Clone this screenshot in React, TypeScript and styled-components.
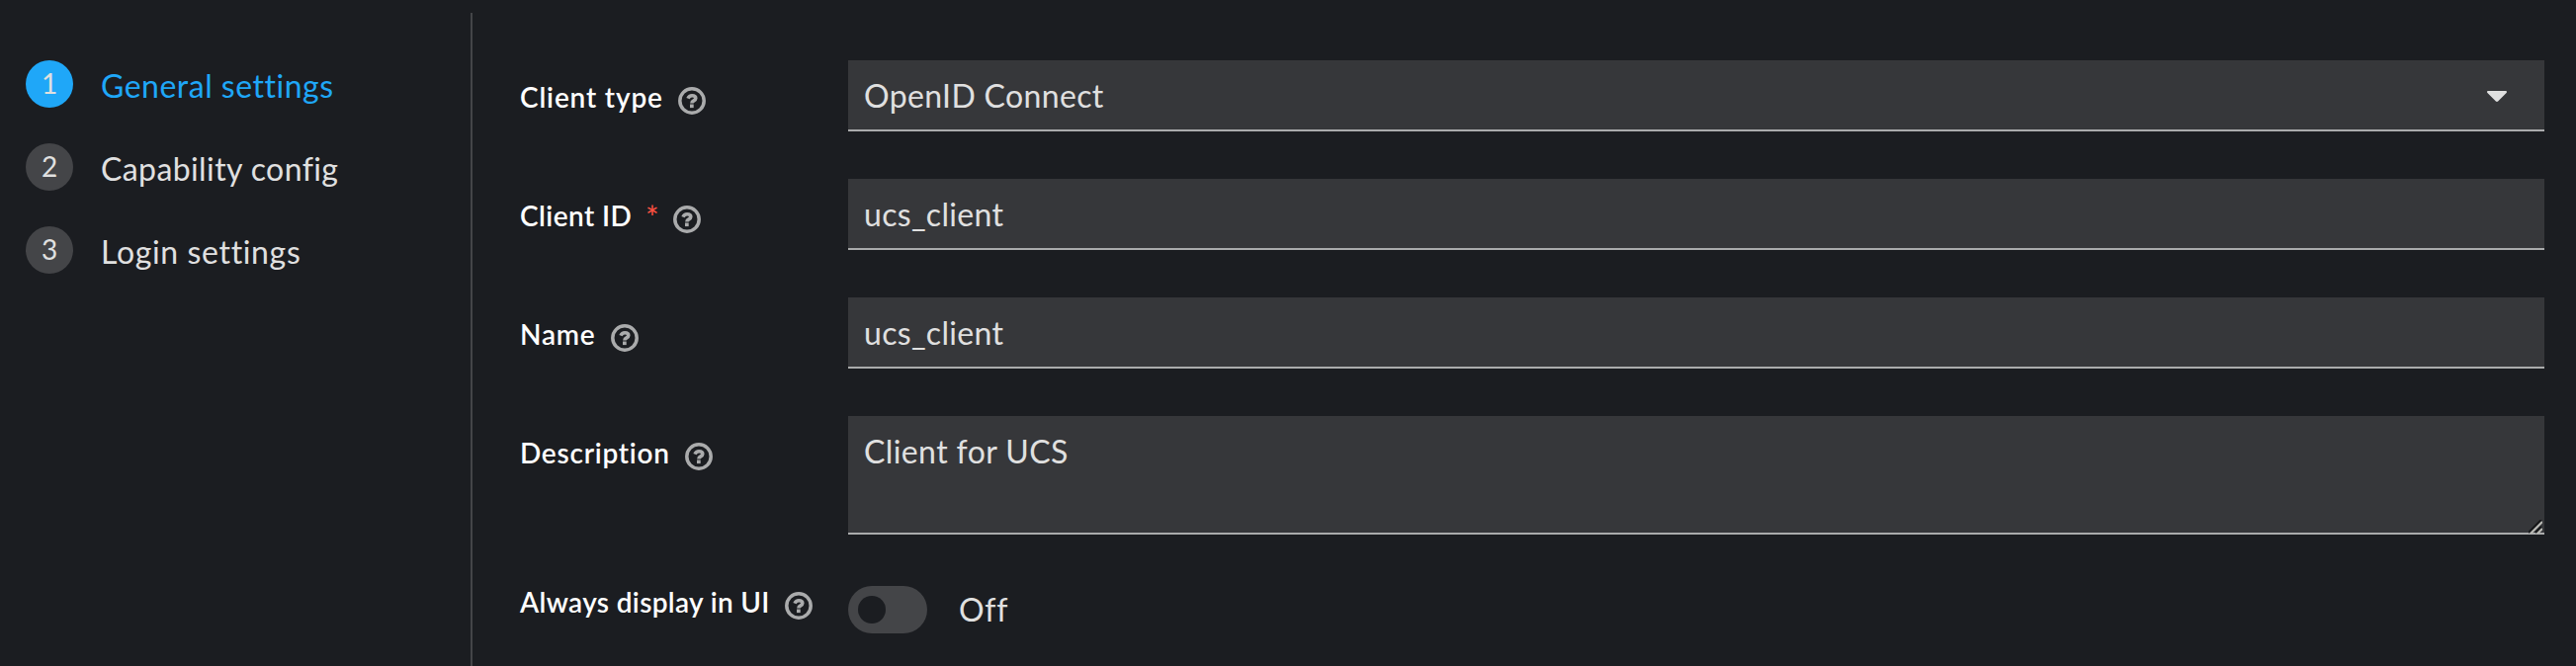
import React from "react";
import styled, { createGlobalStyle } from "styled-components";

const GlobalStyle = createGlobalStyle`
  *, *::before, *::after { box-sizing: border-box; }
  html, body { margin: 0; background: #1b1d21; }
  body { overflow: hidden; }
`;

const Page = styled.div`
  display: flex;
  width: 100%;
  height: 674px;
  padding-top: 13px;
  overflow: hidden;
  background: #1b1d21;
  color: #e0e0e0;
  font-family: Lato, "Liberation Sans", sans-serif;
  font-size: 32px;
  line-height: 48px;
  letter-spacing: 0.5px;
  font-variant-ligatures: none;
`;

const Sidebar = styled.nav`
  flex: none;
  width: 478px;
  padding: 48px 0 0 26px;
  border-right: 2px solid #444548;
`;

const Steps = styled.ol`
  display: flex;
  flex-direction: column;
  gap: 36px;
  margin: 0;
  padding: 0;
  list-style: none;
`;

const Step = styled.li<{ $active?: boolean }>`
  display: flex;
  gap: 28px;
  height: 48px;
  color: ${(p) => (p.$active ? "#1fa7f8" : "#e0e0e0")};
`;

const StepNumber = styled.span<{ $active?: boolean }>`
  display: flex;
  justify-content: center;
  width: 48px;
  height: 48px;
  border-radius: 50%;
  background: ${(p) => (p.$active ? "#1fa7f8" : "#444548")};
  color: #e0e0e0;
  font-size: 28px;
  line-height: 46px;
  letter-spacing: 0;
`;

const StepName = styled.span<{ $spacing: number }>`
  padding-top: 2px;
  letter-spacing: ${(p) => p.$spacing}px;
  white-space: nowrap;
`;

const Form = styled.form`
  display: flex;
  flex: 1;
  flex-direction: column;
  gap: 48px;
  padding: 48px 32px 0 48px;
`;

const Row = styled.div<{ $pull?: number }>`
  display: grid;
  grid-template-columns: 332px 1fr;
  align-items: start;
  margin-top: ${(p) => -(p.$pull ?? 0)}px;
`;

const LabelCell = styled.div<{ $offset: number }>`
  display: flex;
  align-items: flex-start;
  padding-top: ${(p) => p.$offset}px;
`;

const LabelText = styled.label<{ $spacing: number; $width: number }>`
  width: ${(p) => p.$width}px;
  color: #fff;
  font-size: 28px;
  font-weight: 600;
  line-height: 42px;
  letter-spacing: ${(p) => p.$spacing}px;
  white-space: nowrap;
`;

const Required = styled.span`
  width: 27px;
  color: #fe5142;
  font-size: 32px;
  line-height: 46px;
  text-indent: -1px;
`;

const Help = styled.svg`
  flex: none;
  width: 28px;
  height: 28px;
  margin-top: 11px;
  fill: none;
  stroke: #aaabac;
`;

const Field = styled.div<{ $height?: number; $spacing?: number }>`
  position: relative;
  display: flex;
  justify-content: space-between;
  height: ${(p) => p.$height ?? 72}px;
  padding: 12px 38px 0 16px;
  border-bottom: 2px solid #aaabac;
  background: #36373a;
  letter-spacing: ${(p) => p.$spacing ?? 0.3}px;
  white-space: nowrap;
`;

const Caret = styled.svg`
  width: 20px;
  height: 12px;
  margin-top: 19px;
  fill: #e0e0e0;
`;

const Grip = styled.svg`
  position: absolute;
  right: 2px;
  bottom: -1px;
  width: 14px;
  height: 14px;
`;

const SwitchCell = styled.div`
  display: flex;
  align-items: center;
  gap: 32px;
  padding-top: 5px;
`;

const Track = styled.span`
  display: flex;
  align-items: center;
  width: 80px;
  height: 48px;
  padding-left: 10px;
  border-radius: 24px;
  background: #444548;
`;

const Knob = styled.span`
  width: 28px;
  height: 28px;
  border-radius: 50%;
  background: #1b1d21;
`;

const SwitchText = styled.span`
  letter-spacing: 0.8px;
`;

const HelpIcon = () => (
  <Help viewBox="0 0 28 28">
    <circle cx="14" cy="14" r="12.2" strokeWidth="3.5" />
    <path
      d="M10 11.6C10.8 9.7 12.1 8.8 14.1 8.8c2.2 0 3.7 1.1 3.7 2.8 0 2.4-3.9 2.2-3.9 4.8"
      strokeWidth="3.6"
    />
    <rect x="12" y="17.5" width="3.7" height="3.6" fill="#aaabac" stroke="none" />
  </Help>
);

interface LabelProps {
  text: string;
  width: number;
  spacing: number;
  offset?: number;
  required?: boolean;
}

const Label = ({ text, width, spacing, offset = 16, required }: LabelProps) => (
  <LabelCell $offset={offset}>
    <LabelText $width={width} $spacing={spacing}>
      {text}
    </LabelText>
    {required && <Required>*</Required>}
    <HelpIcon />
  </LabelCell>
);

const steps = [
  { name: "General settings", spacing: 0.5 },
  { name: "Capability config", spacing: 0.4 },
  { name: "Login settings", spacing: 0.65 },
];

export default function App() {
  return (
    <>
      <GlobalStyle />
      <Page>
        <Sidebar>
          <Steps>
            {steps.map((step, i) => (
              <Step key={step.name} $active={i === 0}>
                <StepNumber $active={i === 0}>{i + 1}</StepNumber>
                <StepName $spacing={step.spacing}>{step.name}</StepName>
              </Step>
            ))}
          </Steps>
        </Sidebar>
        <Form>
          <Row>
            <Label text="Client type" width={160} spacing={0.85} />
            <Field $spacing={0.35}>
              <span>OpenID Connect</span>
              <Caret viewBox="0 0 20 12">
                <path d="M1.2 0h17.6c1.1 0 1.6 1.2.8 2l-8.5 8.5c-.6.6-1.6.6-2.2 0L.4 2C-.4 1.2.1 0 1.2 0Z" />
              </Caret>
            </Field>
          </Row>
          <Row>
            <Label text="Client ID" width={128} spacing={0.45} required />
            <Field>
              <span>ucs_client</span>
            </Field>
          </Row>
          <Row>
            <Label text="Name" width={92} spacing={0.8} />
            <Field>
              <span>ucs_client</span>
            </Field>
          </Row>
          <Row>
            <Label text="Description" width={167} spacing={0.75} />
            <Field $height={120} $spacing={0.4}>
              <span>Client for UCS</span>
              <Grip viewBox="0 0 14 14">
                <path d="M0 13 13 0M7 13l6-6" stroke="#151618" strokeWidth="2.2" />
                <path d="M2 14 14 2M9 14l5-5" stroke="#b9b9b4" strokeWidth="2.2" />
              </Grip>
            </Field>
          </Row>
          <Row $pull={1}>
            <Label text="Always display in UI" width={268} spacing={0.35} offset={0} />
            <SwitchCell>
              <Track>
                <Knob />
              </Track>
              <SwitchText>Off</SwitchText>
            </SwitchCell>
          </Row>
        </Form>
      </Page>
    </>
  );
}
